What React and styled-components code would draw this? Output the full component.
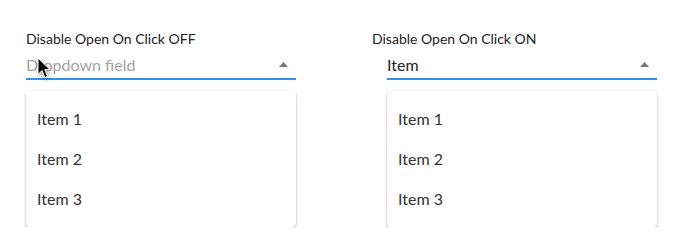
import React from 'react';
import styled, { createGlobalStyle } from 'styled-components';

const GlobalStyle = createGlobalStyle`
    body {
        margin: 0;
        background: #fff;
        font-family: Lato, 'Open Sans', sans-serif;
    }
`;

const Page = styled.div`
    display: flex;
    gap: 76px;
    padding: 31px 0 0 26px;
`;

const Column = styled.div`
    position: relative;
    display: flex;
    flex-direction: column;
    width: ${p => p.$indent ? 285 : 270}px;
`;

const Label = styled.div`
    font-size: 14px;
    line-height: 18px;
    color: #222;
    height: 18px;
    margin-top: -1px;
    margin-bottom: 1px;
`;

const Body = styled.div`
    margin-left: ${p => p.$indent}px;
    margin-top: 3px;
`;

const Field = styled.div`
    display: flex;
    align-items: center;
    justify-content: space-between;
    height: 25px;
    padding: 0 8px 1px 0;
    border-bottom: 2px solid #3390ec;
    font-size: 16px;
    color: ${p => p.$placeholder ? '#a4a4a4' : '#222'};
`;

const Menu = styled.ul`
    list-style: none;
    margin: 11px 0 0;
    padding: 8px 0;
    background: #fff;
    border-radius: 4px;
    box-shadow: 0 2px 3px rgba(0, 0, 0, 0.28), 0 0 3px rgba(0, 0, 0, 0.06);
`;

const Item = styled.li`
    height: 40px;
    display: flex;
    align-items: center;
    padding: 0 11px 1px;
    box-sizing: border-box;
    font-size: 16px;
    color: #333;
`;

const Cursor = styled.svg`
    position: absolute;
    left: 11px;
    top: 26px;
    filter: drop-shadow(1px 2px 2px rgba(0, 0, 0, 0.35));
`;

const Arrow = () => (
    <svg width="9" height="5" viewBox="0 0 9 5">
        <path d="M0 5 L4.5 0 L9 5 Z" fill="#777" />
    </svg>
);

const Dropdown = ({ label, value, placeholder, indent, cursor }) => (
    <Column $indent={indent}>
        <Label>{label}</Label>
        <Body $indent={indent}>
            <Field $placeholder={placeholder}>
                <span>{value}</span>
                <Arrow />
            </Field>
            <Menu>
                <Item>Item 1</Item>
                <Item>Item 2</Item>
                <Item>Item 3</Item>
            </Menu>
        </Body>
        {cursor && (
            <Cursor width="14" height="22" viewBox="0 0 14 22">
                <path d="M1 1 L1 17.5 L5 13.5 L7.8 20.5 L10.6 19.3 L7.8 12.6 L13 12.6 Z" fill="#000" stroke="#fff" strokeWidth="1" strokeLinejoin="round" />
            </Cursor>
        )}
    </Column>
);

const App = () => {
    return (
        <>
            <GlobalStyle />
            <Page>
                <Dropdown label="Disable Open On Click OFF" value="Dropdown field" placeholder indent={0} cursor />
                <Dropdown label="Disable Open On Click ON" value="Item" indent={15} />
            </Page>
        </>
    );
}

export default App;
